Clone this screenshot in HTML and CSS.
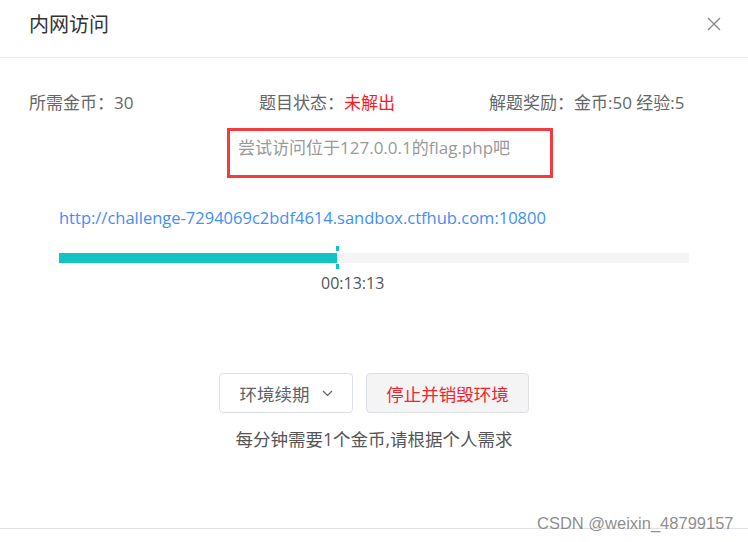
FILE: index.html
```html
<!DOCTYPE html>
<html lang="zh-CN">
<head>
<meta charset="utf-8">
<link rel="stylesheet" href="styles.css">
</head>
<body>
<div class="dialog">
  <div class="header">
    <span class="title">内网访问</span>
    <svg class="close" width="14" height="14" viewBox="0 0 14 14"><path d="M1 1L13 13M13 1L1 13" stroke="#8a8a8a" stroke-width="1.4" fill="none"/></svg>
  </div>
  <div class="info">
    <div class="cell">所需金币：<span class="num">30</span></div>
    <div class="cell">题目状态：<span class="red">未解出</span></div>
    <div class="cell">解题奖励：金币<span class="num">:50 </span>经验<span class="num">:5</span></div>
  </div>
  <div class="hint"><span class="hint-text">尝试访问位于<span class="num">127.0.0.1</span>的<span class="num">flag.php</span>吧</span></div>
  <div class="url num">http://challenge-7294069c2bdf4614.sandbox.ctfhub.com:10800</div>
  <div class="bar">
    <div class="fill" style="width:278px"></div>
    <span class="mark mark-top"></span>
    <span class="mark mark-bottom"></span>
  </div>
  <div class="time num">00:13:13</div>
  <div class="buttons">
    <button class="btn btn-renew">环境续期 <svg class="chev" width="11" height="7" viewBox="0 0 11 7"><path d="M1 1L5.5 5.5L10 1" stroke="#606266" stroke-width="1.2" fill="none"/></svg></button>
    <button class="btn btn-stop">停止并销毁环境</button>
  </div>
  <div class="note">每分钟需要<span class="num">1</span>个金币<span class="num">,</span>请根据个人需求</div>
  <div class="footer"></div>
  <div class="watermark">CSDN @weixin_48799157</div>
</div>
</body>
</html>
```
FILE: styles.css
```css
html, body {
  margin: 0;
  padding: 0;
  background: #fff;
}
body {
  font-family: "Noto Sans CJK SC", "Noto Sans", sans-serif;
  color: #606266;
}
.dialog {
  position: relative;
  width: 748px;
  height: 542px;
  overflow: hidden;
}
.header {
  height: 57px;
  border-bottom: 1px solid #e8e8e8;
  display: flex;
  align-items: center;
  justify-content: space-between;
  padding: 0 27px 0 29px;
  box-sizing: content-box;
}
.header .title {
  font-size: 20px;
  color: #333;
  line-height: 28px;
  margin-top: -10px;
}
.close {
  margin-top: -10px;
}
.num {
  font-family: "Open Sans", "Noto Sans CJK SC", sans-serif;
}
.info {
  display: grid;
  grid-template-columns: 230px 230px 230px;
  padding: 0 29px;
  margin-top: 32px;
  font-size: 17px;
  line-height: 24px;
  color: #666;
}
.red {
  color: #ff1a1a;
}
.hint {
  margin: 13px 0 0 227px;
  width: 312px;
  height: 40px;
  border: 3px solid #f43c3c;
  font-size: 17px;
  line-height: 24px;
  color: #999;
  padding: 4px 0 0 8px;
  box-sizing: content-box;
}
.url {
  margin: 28px 0 0 59px;
  font-size: 16.5px;
  line-height: 24px;
  color: #3f8efc;
}
.bar {
  position: relative;
  margin: 23px 0 0 59px;
  width: 630px;
  height: 10px;
  background: #f4f4f4;
}
.fill {
  height: 10px;
  background: #13c2c2;
}
.mark {
  position: absolute;
  left: 277px;
  width: 3px;
  height: 5px;
  background: #13c2c2;
}
.mark-top { top: -7px; }
.mark-bottom { top: 11px; }
.time {
  margin: 8px 0 0 321px;
  font-size: 16px;
  line-height: 24px;
  color: #555;
}
.buttons {
  display: flex;
  justify-content: center;
  gap: 13px;
  margin-top: 78px;
}
.btn {
  height: 40px;
  border: 1px solid #dcdfe6;
  border-radius: 4px;
  background: #fff;
  font-family: "Noto Sans CJK SC", sans-serif;
  font-size: 17.5px;
  padding: 0;
  display: flex;
  align-items: center;
  justify-content: center;
}
.btn-renew {
  width: 134px;
  color: #606266;
  gap: 12px;
}
.btn-stop {
  width: 163px;
  color: #f5222d;
  background: #f4f4f5;
}
.note {
  margin-top: 14px;
  text-align: center;
  font-size: 17.5px;
  line-height: 24px;
  color: #555;
}
.footer {
  position: absolute;
  left: 0;
  right: 0;
  top: 528px;
  height: 1px;
  background: #e0e0e0;
}
.watermark {
  position: absolute;
  left: 537px;
  top: 512px;
  font-family: "Liberation Sans", Arial, sans-serif;
  font-size: 16.5px;
  line-height: 22px;
  color: rgba(120,120,120,0.85);
}
```
